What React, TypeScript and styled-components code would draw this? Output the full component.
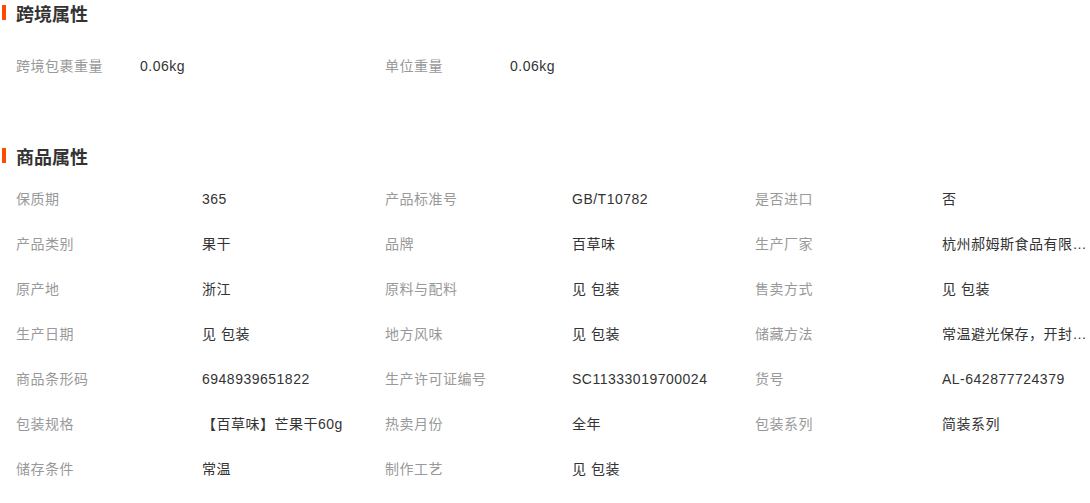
import styled, { createGlobalStyle } from "styled-components";

const GlobalStyle = createGlobalStyle`
  html, body {
    margin: 0;
    padding: 0;
    background: #fff;
  }
  body {
    font-family: "Liberation Sans", "Noto Sans CJK SC", sans-serif;
    font-size: 14px;
    color: #333;
  }
`;

type Attr = { label: string; value: string };

const crossBorder: Attr[] = [
  { label: "跨境包裹重量", value: "0.06kg" },
  { label: "单位重量", value: "0.06kg" },
];

const goodsAttrs: Attr[] = [
  { label: "保质期", value: "365" },
  { label: "产品标准号", value: "GB/T10782" },
  { label: "是否进口", value: "否" },
  { label: "产品类别", value: "果干" },
  { label: "品牌", value: "百草味" },
  { label: "生产厂家", value: "杭州郝姆斯食品有限公司" },
  { label: "原产地", value: "浙江" },
  { label: "原料与配料", value: "见 包装" },
  { label: "售卖方式", value: "见 包装" },
  { label: "生产日期", value: "见 包装" },
  { label: "地方风味", value: "见 包装" },
  { label: "储藏方法", value: "常温避光保存，开封后请尽快食用" },
  { label: "商品条形码", value: "6948939651822" },
  { label: "生产许可证编号", value: "SC11333019700024" },
  { label: "货号", value: "AL-642877724379" },
  { label: "包装规格", value: "【百草味】芒果干60g" },
  { label: "热卖月份", value: "全年" },
  { label: "包装系列", value: "简装系列" },
  { label: "储存条件", value: "常温" },
  { label: "制作工艺", value: "见 包装" },
];

const Page = styled.div`
  width: 1090px;
  overflow: hidden;
`;

const Section = styled.section<{ $gap?: number }>`
  margin-top: ${(p) => p.$gap ?? 0}px;
`;

const Title = styled.h3`
  position: relative;
  margin: 0;
  height: 26px;
  line-height: 26px;
  padding-left: 16px;
  font-size: 18px;
  font-weight: bold;
  color: #333;
  font-family: "Noto Sans CJK SC", sans-serif;

  &::before {
    content: "";
    position: absolute;
    left: 2px;
    top: 5px;
    width: 4px;
    height: 15px;
    background: #ff4a00;
  }
`;

const Grid = styled.dl<{ $cols: string; $top: number }>`
  display: grid;
  grid-template-columns: ${(p) => p.$cols};
  margin: 0;
  padding: ${(p) => p.$top}px 0 0 16px;
`;

const Cell = styled.div`
  height: 45px;
  line-height: 45px;
  letter-spacing: 0.5px;
  white-space: nowrap;
  overflow: hidden;
  text-overflow: ellipsis;
  padding-right: 2px;
`;

const Label = styled(Cell).attrs({ as: "dt" })`
  color: #999;
`;

const Value = styled(Cell).attrs({ as: "dd" })`
  margin: 0;
  color: #333;
`;

const AttrGrid = ({
  items,
  cols,
  top,
}: {
  items: Attr[];
  cols: string;
  top: number;
}) => (
  <Grid $cols={cols} $top={top}>
    {items.map((a) => (
      <>
        <Label key={a.label + "-l"}>{a.label}</Label>
        <Value key={a.label + "-v"}>{a.value}</Value>
      </>
    ))}
  </Grid>
);

export default function App() {
  return (
    <Page>
      <GlobalStyle />
      <Section>
        <Title>跨境属性</Title>
        <AttrGrid items={crossBorder} cols="124px 245px 125px 1fr" top={18} />
      </Section>
      <Section $gap={54}>
        <Title>商品属性</Title>
        <AttrGrid
          items={goodsAttrs}
          cols="186px 183px 187px 183px 187px 148px"
          top={8}
        />
      </Section>
    </Page>
  );
}
